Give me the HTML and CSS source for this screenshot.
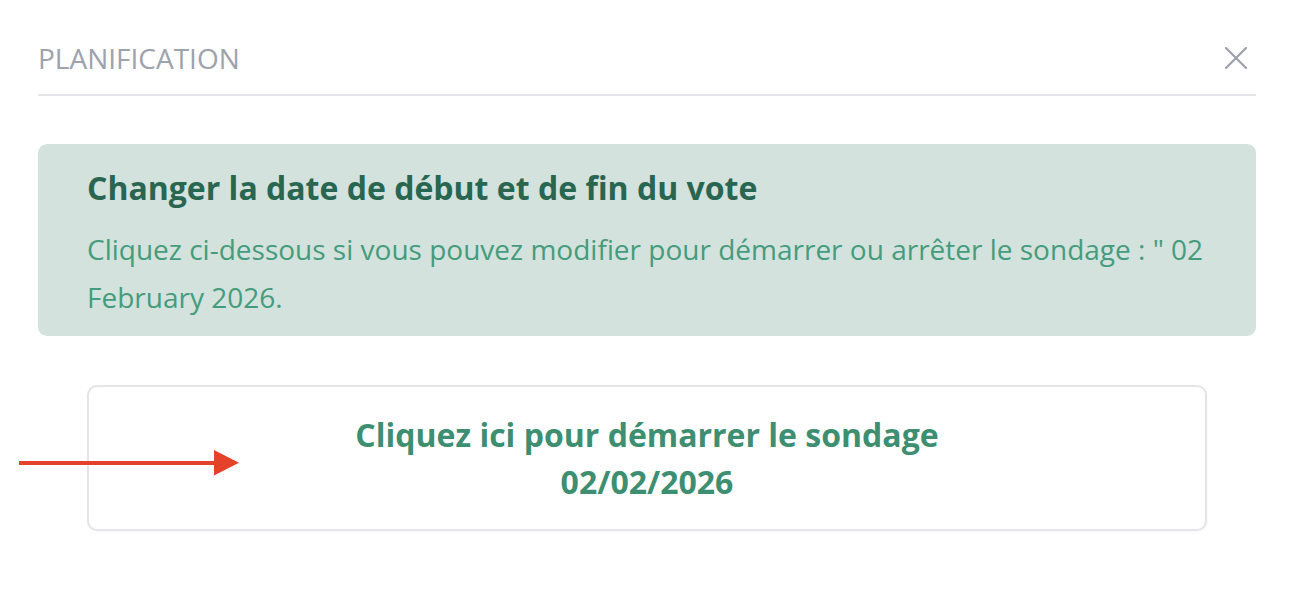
FILE: index.html
```html
<!DOCTYPE html>
<html lang="fr">
<head>
<meta charset="utf-8">
<title>Planification</title>
<link rel="stylesheet" href="styles.css">
</head>
<body>
<div class="page">
  <header class="modal-header">
    <h2 class="modal-title">PLANIFICATION</h2>
    <button class="close-btn" aria-label="Fermer">
      <svg width="22" height="22" viewBox="0 0 22 22"><path d="M1 1 L21 21 M21 1 L1 21" stroke="#9da1ab" stroke-width="2.2" fill="none" stroke-linecap="square"/></svg>
    </button>
  </header>
  <div class="alert">
    <h3 class="alert-title">Changer la date de début et de fin du vote</h3>
    <p class="alert-text">Cliquez ci-dessous si vous pouvez modifier pour démarrer ou arrêter le sondage : " 02 February 2026.</p>
  </div>
  <div class="action-card">
    <span class="action-line">Cliquez ici pour démarrer le sondage</span>
    <span class="action-line">02/02/2026</span>
  </div>
  <svg class="pointer-arrow" width="222" height="26" viewBox="0 0 222 26">
    <rect x="0" y="11" width="198" height="4" fill="#e5422b"/>
    <polygon points="195,0 220,12.8 195,25.5" fill="#e5422b"/>
  </svg>
</div>
</body>
</html>
```
FILE: styles.css
```css
* { box-sizing: border-box; }
html, body { margin: 0; padding: 0; background: #ffffff; }
body { font-family: "Open Sans", "Noto Sans", sans-serif; }
.page {
  position: relative;
  padding: 0 36px 0 38px;
  width: 1292px;
  height: 596px;
}
.modal-header {
  display: flex;
  align-items: center;
  justify-content: space-between;
  padding: 39px 0 17px;
  border-bottom: 2px solid #e5e5ea;
}
.modal-title {
  margin: 0;
  font-size: 28px;
  line-height: 38px;
  font-weight: 400;
  color: #9ea2ad;
}
.close-btn {
  border: 0;
  background: none;
  padding: 0;
  margin-right: 9px;
  width: 22px;
  height: 22px;
  display: flex;
}
.alert {
  margin-top: 48px;
  background: #d3e2dd;
  border-radius: 9px;
  padding: 25px 48px 15px 49px;
}
.alert-title {
  margin: 0 0 18px;
  font-size: 32px;
  line-height: 38px;
  font-weight: 700;
  color: #286651;
}
.alert-text {
  margin: 0;
  font-size: 28px;
  line-height: 48px;
  color: #459c7c;
}
.action-card {
  margin: 49px 49px 0;
  border: 2px solid #e4e4e9;
  border-radius: 10px;
  padding: 24px 20px;
  display: flex;
  flex-direction: column;
  align-items: center;
  box-shadow: 0 1px 3px rgba(0,0,0,0.04);
}
.action-line {
  font-size: 32px;
  line-height: 47px;
  font-weight: 700;
  color: #3e8e72;
}
.pointer-arrow {
  position: absolute;
  left: 19px;
  top: 450px;
}
```
